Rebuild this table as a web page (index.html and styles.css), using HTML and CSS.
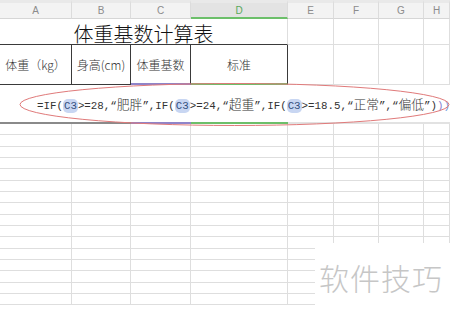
FILE: index.html
```html
<!DOCTYPE html>
<html>
<head>
<meta charset="utf-8">
<link rel="stylesheet" href="styles.css">
</head>
<body>
<div class="sheet">
  <div class="h">A</div><div class="h">B</div><div class="h">C</div><div class="h sel">D</div><div class="h">E</div><div class="h">F</div><div class="h">G</div><div class="h">H</div>

  <div class="title">体重基数计算表</div><div></div><div></div><div></div><div></div>

  <div class="th">体重（kg）</div><div class="th">身高(cm)</div><div class="th ref">体重基数</div><div class="th cur">标准</div><div></div><div></div><div></div><div></div>

  <div class="fx"><span>=IF(<b class="c3">C3</b>&gt;=28,“<i class="cj">肥胖</i>”,IF(<b class="c3">C3</b>&gt;=24,“<i class="cj">超重</i>”,IF(<b class="c3">C3</b>&gt;=18.5,“<i class="cj">正常</i>”,“<i class="cj">偏低</i>”)<em class="p2">)</em><em class="p3">)</em></span></div>

  <div></div><div></div><div></div><div></div><div></div><div></div><div></div><div></div>
  <div></div><div></div><div></div><div></div><div></div><div></div><div></div><div></div>
  <div></div><div></div><div></div><div></div><div></div><div></div><div></div><div></div>
  <div></div><div></div><div></div><div></div><div></div><div></div><div></div><div></div>
  <div></div><div></div><div></div><div></div><div></div><div></div><div></div><div></div>
  <div></div><div></div><div></div><div></div><div></div><div></div><div></div><div></div>
  <div></div><div></div><div></div><div></div><div></div><div></div><div></div><div></div>
  <div></div><div></div><div></div><div></div><div></div><div></div><div></div><div></div>
  <div></div><div></div><div></div><div></div><div></div><div></div><div></div><div></div>
  <div></div><div></div><div></div><div></div><div></div><div></div><div></div><div></div>
  <div></div><div></div><div></div><div></div><div></div><div></div><div></div><div></div>
  <div></div><div></div><div></div><div></div><div></div><div></div><div></div><div></div>
  <div></div><div></div><div></div><div></div><div></div><div></div><div></div><div></div>
  <div></div><div></div><div></div><div></div><div></div><div></div><div></div><div></div>
  <div></div><div></div><div></div><div></div><div></div><div></div><div></div><div></div>
  <div></div><div></div><div></div><div></div><div></div><div></div><div></div><div></div>

  <svg class="ring" width="450" height="311" viewBox="0 0 450 311">
    <ellipse cx="234.5" cy="104.5" rx="214.5" ry="21" fill="none" stroke="#e07a7a" stroke-width="1"/>
  </svg>
  <div class="wm">软件技巧</div>
</div>
</body>
</html>
```
FILE: styles.css
```css
html, body {
  margin: 0;
  padding: 0;
  background: #fff;
}
body {
  font-family: "Noto Sans CJK SC", "Noto Sans", sans-serif;
  overflow: hidden;
  width: 450px;
  height: 311px;
}
.sheet {
  position: relative;
  display: grid;
  grid-template-columns: 72px 59px 60px 97px 46px 45px 45px 1fr;
  grid-template-rows: 19px 26px 40px 39px;
  grid-auto-rows: 11.34px;
  width: 450px;
  height: 311px;
  overflow: hidden;
}
.sheet > div {
  box-sizing: border-box;
  border-right: 1px solid #dedede;
  border-bottom: 1px solid #dedede;
}
.sheet > div.h {
  background: #f3f3f3;
  border-top: 3px solid #e9e9e9;
  border-right-color: #dcdcdc;
  border-bottom-color: #d6d6d6;
  color: #8c8c8c;
  font: 10px "Liberation Sans", sans-serif;
  display: flex;
  align-items: center;
  justify-content: center;
}
.sheet > div.h.sel {
  background: #e3e3e3;
  color: #58a85a;
  border-bottom: 2px solid #6cbf6a;
}
.sheet > div.title {
  grid-column: 1 / 5;
  display: flex;
  align-items: center;
  justify-content: center;
  font-size: 20px;
  font-weight: 300;
  color: #111;
  border-bottom: 1px solid #3a3a3a;
  padding-top: 3px;
}
.sheet > div.th {
  display: flex;
  align-items: center;
  justify-content: center;
  font-size: 12px;
  font-weight: 300;
  color: #333;
  border-right: 1px solid #3a3a3a;
  border-bottom: 1px solid #3a3a3a;
}
.sheet > div.th.ref {
  border-bottom: 2px solid #8f84c9;
}
.sheet > div.th.cur {
  border-bottom: 2px solid #6cbf6a;
}
.sheet > div.fx {
  grid-column: 1 / -1;
  display: flex;
  align-items: center;
  padding-left: 37px;
  border-right: none;
  border-bottom: 2px solid;
  border-image: linear-gradient(to right, #8a8a8a 0 131px, #8f84c9 131px 191px, #6cbf6a 191px 288px, #e2e2e2 288px) 1;
  font-family: "Liberation Mono", "Noto Sans CJK SC", monospace;
  font-size: 10.8px;
  color: #333;
  white-space: nowrap;
}
.fx b {
  font-weight: normal;
}
.c3 {
  background: #c8d6f2;
  color: #34507e;
  border-radius: 5px;
  padding: 1px 1px;
}
.cj {
  font-style: normal;
  font-family: "Noto Sans CJK SC", sans-serif;
  font-size: 12.8px;
  font-weight: 300;
}
.fx em {
  font-style: normal;
}
.p2 { color: #8a7fcf; }
.p3 { color: #6b98dc; }
.ring {
  position: absolute;
  left: 0;
  top: 0;
  pointer-events: none;
}
.sheet > div.wm {
  position: absolute;
  left: 315px;
  top: 243px;
  right: 0;
  bottom: 0;
  background: #fff;
  border: none;
  color: #c6c6c6;
  font-size: 30px;
  font-weight: 300;
  line-height: 1;
  padding: 19px 0 0 4px;
  letter-spacing: 1px;
}
```
